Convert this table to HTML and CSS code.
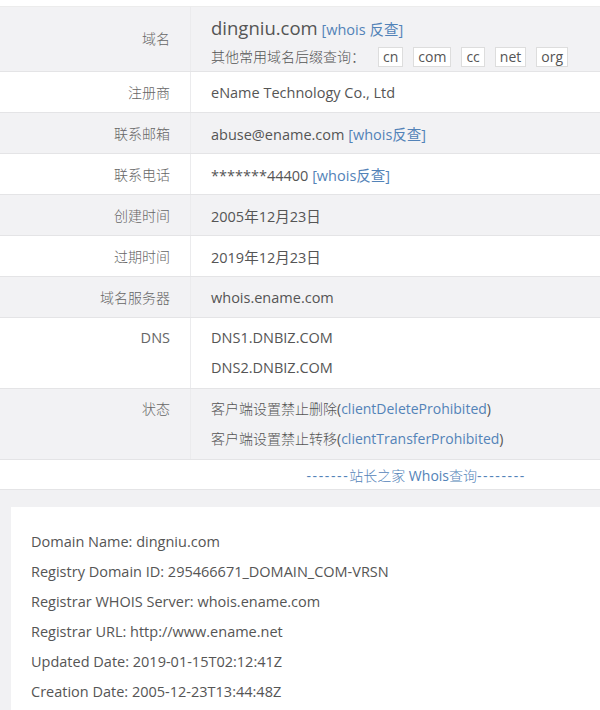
FILE: index.html
```html
<!DOCTYPE html>
<html lang="zh-CN">
<head>
<meta charset="utf-8">
<title>Whois</title>
<link rel="stylesheet" href="styles.css">
</head>
<body>
<table class="info">
  <tr class="row gray">
    <td class="label label-domain">域名</td>
    <td class="value domain-cell">
      <div class="domain-line"><span class="domain">dingniu.com</span> <a class="link">[whois 反查]</a></div>
      <div class="suffix-line"><span class="suffix-text">其他常用域名后缀查询：</span><span class="tag">cn</span><span class="tag">com</span><span class="tag">cc</span><span class="tag">net</span><span class="tag">org</span></div>
    </td>
  </tr>
  <tr class="row">
    <td class="label">注册商</td>
    <td class="value">eName Technology Co., Ltd</td>
  </tr>
  <tr class="row gray">
    <td class="label">联系邮箱</td>
    <td class="value">abuse@ename.com <a class="link">[whois反查]</a></td>
  </tr>
  <tr class="row">
    <td class="label">联系电话</td>
    <td class="value">*******44400 <a class="link">[whois反查]</a></td>
  </tr>
  <tr class="row gray">
    <td class="label">创建时间</td>
    <td class="value">2005年12月23日</td>
  </tr>
  <tr class="row">
    <td class="label">过期时间</td>
    <td class="value">2019年12月23日</td>
  </tr>
  <tr class="row gray">
    <td class="label">域名服务器</td>
    <td class="value">whois.ename.com</td>
  </tr>
  <tr class="row multi">
    <td class="label label-latin">DNS</td>
    <td class="value">
      <div class="line">DNS1.DNBIZ.COM</div>
      <div class="line">DNS2.DNBIZ.COM</div>
    </td>
  </tr>
  <tr class="row multi gray">
    <td class="label">状态</td>
    <td class="value status">
      <div class="line"><span class="cjk">客户端设置禁止删除</span>(<a class="link">clientDeleteProhibited</a>)</div>
      <div class="line"><span class="cjk">客户端设置禁止转移</span>(<a class="link">clientTransferProhibited</a>)</div>
    </td>
  </tr>
  <tr class="row footer">
    <td class="label"></td>
    <td class="value"><a class="link footer-link"><span class="dashes">-------</span><span class="cjk">站长之家</span> Whois<span class="cjk">查询</span><span class="dashes">--------</span></a></td>
  </tr>
</table>
<section class="raw">
  <div class="card">
    <p>Domain Name: dingniu.com</p>
    <p>Registry Domain ID: 295466671_DOMAIN_COM-VRSN</p>
    <p>Registrar WHOIS Server: whois.ename.com</p>
    <p>Registrar URL: http://www.ename.net</p>
    <p>Updated Date: 2019-01-15T02:12:41Z</p>
    <p>Creation Date: 2005-12-23T13:44:48Z</p>
  </div>
</section>
</body>
</html>
```
FILE: styles.css
```css
html, body {
  margin: 0;
  padding: 0;
  background: #fff;
  overflow: hidden;
}
body {
  font-family: "Open Sans", "Noto Sans CJK SC", sans-serif;
  font-size: 14.5px;
  color: #555;
  padding-top: 6px;
  width: 600px;
}
.cjk {
  font-weight: 300;
}
.info {
  width: 600px;
  border-collapse: collapse;
  border-top: 1px solid #ececec;
}
.info td {
  border-bottom: 1px solid #e4e4e6;
  padding: 0;
  height: 40px;
  vertical-align: middle;
}
.gray td {
  background: #f2f2f4;
}
.label {
  width: 170px;
  padding-right: 20px !important;
  text-align: right;
  color: #666;
  border-right: 1px solid #ebebed;
  font-size: 14px;
  font-weight: 300;
}
.label-latin {
  font-weight: 400;
  font-size: 14.5px;
}
.label-domain {
  padding-bottom: 3px !important;
}
.value {
  padding-left: 20px !important;
  color: #555;
}
.link {
  color: #5383b8;
  text-decoration: none;
}
.domain-cell {
  padding-top: 7px !important;
  padding-bottom: 3px !important;
}
.domain-line {
  height: 28px;
  line-height: 28px;
}
.domain {
  font-size: 18.5px;
  color: #555;
}
.suffix-line {
  margin-top: 4px;
  height: 22px;
  line-height: 22px;
  font-size: 14px;
  display: flex;
  align-items: center;
  gap: 10px;
}
.suffix-text {
  margin-right: 3px;
  font-weight: 300;
}
.tag {
  display: inline-block;
  height: 18px;
  line-height: 18px;
  padding: 0 4px;
  border: 1px solid #ddd;
  background: #fff;
  color: #555;
  font-size: 14px;
}
.multi td {
  height: auto;
  vertical-align: top;
  padding-top: 5px;
  padding-bottom: 5px;
  line-height: 30px;
}
.line {
  height: 30px;
  line-height: 30px;
}
.status {
  font-size: 14px;
}
.footer td {
  height: 29px;
  background: #fff;
}
.footer .label {
  border-right: none;
}
.footer-link {
  display: inline-block;
  margin-left: 96px;
  font-size: 14px;
}
.dashes {
  letter-spacing: 1.6px;
}
.raw {
  background: #f1f1f3;
  padding-top: 17px;
  padding-left: 11px;
}
.card {
  background: #fff;
  padding: 20px;
  color: #555;
}
.card p {
  margin: 0;
  height: 30px;
  line-height: 30px;
}
```
